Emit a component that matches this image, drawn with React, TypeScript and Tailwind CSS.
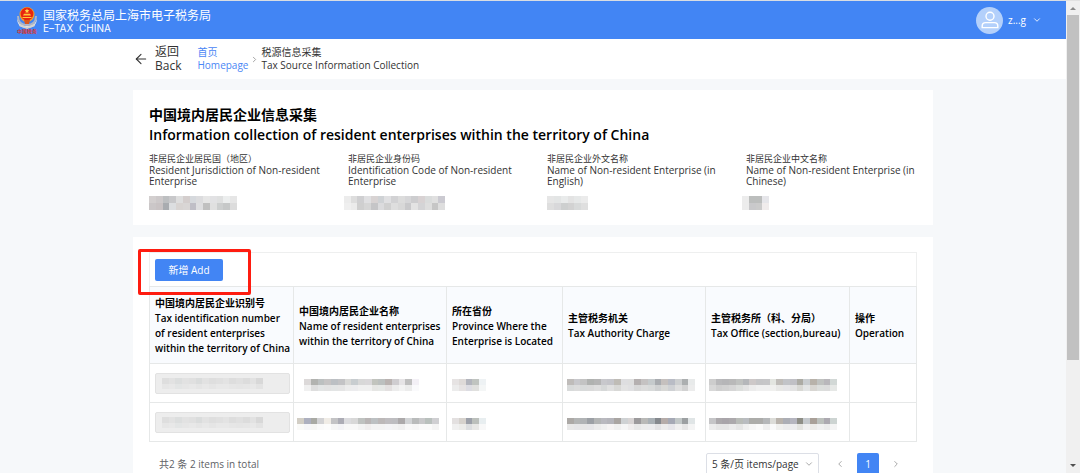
import { ArrowLeft, ChevronDown, ChevronLeft, ChevronRight } from 'lucide-react';

const FIELDS = [
  {
    zh: '非居民企业居民国（地区）',
    en: 'Resident Jurisdiction of Non-resident Enterprise',
    shift: '',
    mask: [
      ['#d3cfcf', '#cdc9ca', '#bdbfc1', '#c8c8ca', '#dedede', '#d4cecd', '#d6d9dd', '#dcdcde', '#e6e6e6', '#e2e2e4', '#dfe0e0', '#eceeee', '#e6e6e6'],
      ['#cbc7c8', '#c9c3c4', '#a9acb0', '#dcdee0', '#d8d4d2', '#d9d6d5', '#bfbec6', '#dedee0', '#c0c0c0', '#e0e0e0', '#cdcfcf', '#c6c8c8', '#dcdcdc'],
    ],
  },
  {
    zh: '非居民企业身份码',
    en: 'Identification Code of Non-resident Enterprise',
    shift: '-ml-1',
    mask: [
      ['#ececec', '#dddddd', '#cfcfd1', '#e0e0e2', '#d8d3d3', '#cfd2d5', '#e0e0e2', '#d2d2d4', '#dcdcdc', '#d6d6d8', '#cdcdcf', '#d8d2d3', '#dadcdc', '#e0e0e0', '#cbcad1'],
      ['#efefef', '#ebebeb', '#cfcfcf', '#d6d6d6', '#c5c5c7', '#dbdbdd', '#d0d0d0', '#dedede', '#d8d8d8', '#c9c9cb', '#e3e3e3', '#d4d4d6', '#dedede', '#c6c6c6', '#dedede'],
    ],
  },
  {
    zh: '非居民企业外文名称',
    en: 'Name of Non-resident Enterprise (in English)',
    shift: '',
    mask: [
      ['#e6e6e6', '#e3e5e5', '#e9ebeb', '#e3e3e3', '#e6e8e8', '#ebebeb'],
      ['#dedede', '#d8d8da', '#cdcfcf', '#d2d2d2', '#d8dada', '#dfdfdf'],
    ],
  },
  {
    zh: '非居民企业中文名称',
    en: 'Name of Non-resident Enterprise (in Chinese)',
    shift: '-ml-1',
    mask: [
      ['#ececec', '#bcbebd', '#bcbebd', '#e6e6ea'],
      ['#ececec', '#c9c9cb', '#cbcbcb', '#f0ecec'],
    ],
  },
];

const COLUMNS = [
  {
    width: 'w-[144px]',
    zh: '中国境内居民企业识别号',
    en: ['Tax identification number', 'of resident enterprises', 'within the territory of China'],
  },
  {
    width: 'w-[153px]',
    zh: '中国境内居民企业名称',
    en: ['Name of resident enterprises', 'within the territory of China'],
  },
  { width: 'w-[116px]', zh: '所在省份', en: ['Province Where the', 'Enterprise is Located'] },
  { width: 'w-[143px]', zh: '主管税务机关', en: ['Tax Authority Charge'] },
  { width: 'w-[144px]', zh: '主管税务所（科、分局）', en: ['Tax Office (section,bureau)'] },
  { width: 'w-[67px]', zh: '操作', en: ['Operation'] },
];

const ID_MASK = [
  ['#dedede', '#e2e2e2', '#dcdede', '#e2e2e2', '#e0e0e0', '#dadcdc', '#e2e2e2', '#dedede', '#e0e0e0', '#e3e3e3', '#dddddd', '#e0e0e0', '#dcdcdc', '#e2e2e2', '#d8d8d8'],
  ['#e6e6e6', '#e8e8e8', '#e3e5e5', '#e6e6e6', '#e8e8e8', '#e5e5e5', '#e8e8e8', '#e5e5e5', '#e8e8e8', '#e8e8e8', '#e6e6e6', '#e5e5e5', '#e6e6e6', '#e8e8e8', '#e3e3e3'],
];

const ROWS = [
  {
    name: {
      pad: 'pl-[10px]',
      mask: [
        ['#dcd9d9', '#b2b3b0', '#bcc0c0', '#c6c4c4', '#bcc0c4', '#c3c3c5', '#d8d8d6', '#c8cdd0', '#d8d8d8', '#dad8da', '#c2c4be', '#bcc0bf', '#bab3b1', '#cfcdd0', '#e6e4e6', '#bfbfbf', '#f3f0f6'],
        ['#f0f0f0', '#dedede', '#e3e5e5', '#e3e3e3', '#e3e5e5', '#e5e5e5', '#ececec', '#ececee', '#f0f0f0', '#f0f0f0', '#e6e6e4', '#e6e8e6', '#e3e0e0', '#ececec', '#f3f3f3', '#ececec', '#fafafc'],
      ],
    },
    province: [
      ['#e6e3e3', '#dedad8', '#b3b5bd', '#c0c4c0', '#eef2f4'],
      ['#ececec', '#e6e3e3', '#dcdce2', '#e0e0de', '#f4f6f6'],
    ],
    authority: [
      ['#bfbcba', '#c8c8cc', '#c3c3c3', '#b0b2b0', '#b5b5b5', '#c8c8cc', '#c5c5ca', '#bfbcb6', '#dedee0', '#dedede', '#b5b0b0', '#c5c2c2', '#c5cacc', '#a9acb0', '#c5c0be', '#b9bcc5', '#cdcfd0', '#acafb0', '#e8eaea'],
      ['#d8dada', '#dcdcdc', '#d8dada', '#dadada', '#dedede', '#d6d8d8', '#e0e0e0', '#d8d8d6', '#e3e3e3', '#e0e0e2', '#d8d8d8', '#dcdcdc', '#d8dada', '#cfd1d2', '#d8d8d6', '#cfd1d4', '#dedede', '#d2d2d2', '#ececec'],
    ],
    office: [
      ['#cdcdcd', '#b9b9bb', '#b6b6b8', '#b9b9b9', '#c0c2c0', '#b5b7ba', '#cdc8c8', '#c5c5c7', '#c6c6c8', '#e3e5e0', '#c0bdb9', '#c2c4c8', '#c0c0c5', '#acaba4', '#c9cdd0', '#b8b2aa', '#c0c2c0', '#b9b7bb', '#d2d8d6'],
      ['#d8d8d8', '#cfcfcf', '#d2d2d2', '#d6d6d6', '#dcdedc', '#e3e3e3', '#ececec', '#f0f0f0', '#f0f0f0', '#f0f0ee', '#e8e8e6', '#e6e6e8', '#e3e3e3', '#d8d8d4', '#e3e5e5', '#d8d6d2', '#dcdedc', '#dcdcdc', '#e6e8e6'],
    ],
  },
  {
    name: {
      pad: 'pl-[3px]',
      mask: [
        ['#d2cec5', '#adb0bf', '#a9aaa4', '#d2d2d4', '#f0ece6', '#c3c3c5', '#acacb5', '#dcdcdf', '#d8d8d8', '#bfc2c0', '#b9b5b5', '#bcc0c2', '#bcb8b8', '#bfbdc0', '#bdbdc0', '#aca9aa', '#d2d4d6', '#b9bbbb', '#c8c8ca', '#b9c0bd', '#cfcfd2'],
        ['#fafaf8', '#f6f6f8', '#f6f6f4', '#fafafa', '#fcfcfc', '#f6f6f6', '#f3f3f6', '#f8f8f8', '#f8f8f8', '#f3f3f3', '#f0eeee', '#f3f3f3', '#f3f3f3', '#f4f4f6', '#f3f3f3', '#f0f0f0', '#f8f8f8', '#f6f6f6', '#fafafa', '#fafafa', '#f4f4f4'],
      ],
    },
    province: [
      ['#e3e0e0', '#d6d2cd', '#9ca0a9', '#bcc0bc', '#e8eef0'],
      ['#f0f0f0', '#ececea', '#dcdee0', '#e8e8e6', '#f8f8f8'],
    ],
    authority: [
      ['#aca9a6', '#b3b5b5', '#b0b3b5', '#9ca0a5', '#b3b5b5', '#b9b9bf', '#b5b5bb', '#a9a5a2', '#cfd2d4', '#d8d4d4', '#9c9a9c', '#b9b9b7', '#a9b0b5', '#85898e', '#b5aca9', '#a5a9b5', '#c2c8c8', '#9ca0a2', '#e0e5e6'],
      ['#e8e8e8', '#e6e6e8', '#e6e6e6', '#e6e6e8', '#ececec', '#f0f0f0', '#f6f4f4', '#f0f0f0', '#f6f6f6', '#f0eeee', '#e8e8e8', '#ececec', '#ececee', '#e3e3e5', '#ececec', '#e6e6ea', '#f0f0f0', '#e6e6e6', '#f4f4f4'],
    ],
    office: [
      ['#c5c5c7', '#aca9ac', '#a9a5aa', '#aca9ac', '#b9bcb8', '#b9bcc0', '#acaca9', '#acacaa', '#b5b7b9', '#dcdcd8', '#b9b3ac', '#acaeb5', '#b5b5bf', '#8e8e86', '#c5c9cd', '#a9a098', '#bcc0bc', '#aca9b0', '#cdd4d2'],
      ['#ececec', '#e6e6e6', '#e6e6e6', '#ececec', '#e6e6e6', '#f0f0f0', '#f6f6f6', '#fafafa', '#f0f0f0', '#fafafa', '#f0f0ee', '#ececec', '#ececee', '#e3e3e0', '#f0f0f0', '#ecebe8', '#f0f0f0', '#ececec', '#f4f4f4'],
    ],
  },
];

// Masked value, drawn as a mosaic with one rect per cell
function Mask({ cells, className = '' }: { cells: string[][]; className?: string }) {
  const cols = cells[0].length;
  return (
    <svg
      className={`block ${className}`}
      width={Math.round(cols * 6.75)}
      viewBox={`0 0 ${cols} ${cells.length}`}
      preserveAspectRatio="none"
      shapeRendering="crispEdges"
      aria-hidden="true"
    >
      {cells.map((row, y) =>
        row.map((fill, x) => <rect key={`${x}-${y}`} x={x} y={y} width="1" height="1" fill={fill} />)
      )}
    </svg>
  );
}

function Emblem() {
  return (
    <svg width="22" height="28" viewBox="0 0 22 28" aria-hidden="true">
      <path d="M1 12c1 5 4 8 10 8s9-3 10-8c0 6-3 10-10 10S1 18 1 12z" fill="#dfe3ea" />
      <path d="M2 10c0 6 3 9 9 9s9-3 9-9" fill="none" stroke="#aeb6c6" strokeWidth="2" />
      <path d="M4 18l7 3 7-3 1 2-8 3-8-3z" fill="#d6d3cd" />
      <circle cx="11" cy="8.5" r="7.5" fill="#f0a02c" />
      <circle cx="11" cy="8" r="6.4" fill="#e8250f" />
      <path d="M11 2.6l.7 1.5 1.6.2-1.2 1.1.3 1.6-1.4-.8-1.4.8.3-1.6-1.2-1.1 1.6-.2z" fill="#ffd84a" />
      <path d="M7 9.4h8l-1-1.6H8zM6.5 11h9v1h-9z" fill="#ffc83a" />
      <path d="M8 14h6l-1 4H9z" fill="#d9571f" />
      <text x="11" y="27" textAnchor="middle" fontSize="5" fontWeight="700" fill="#d8332b" fontFamily="'Noto Sans CJK SC', sans-serif">
        中国税务
      </text>
    </svg>
  );
}

function Header() {
  return (
    <header className="flex h-[39px] shrink-0 items-center justify-between border-t border-[#d9dde2] bg-[#4285f4] pr-6 pl-4 text-white">
      <div className="flex items-center gap-[5px]">
        <Emblem />
        <div className="pt-[2px]">
          <div className="text-[12px] leading-[14px]">国家税务总局上海市电子税务局</div>
          <div className="font-[Inter,sans-serif] text-[10px] leading-[10px] whitespace-pre">E–TAX  CHINA</div>
        </div>
      </div>
      <button type="button" className="flex items-center text-[10px]">
        <span className="flex size-[27px] items-center justify-center rounded-full bg-[#b3d0fb]">
          <svg width="18" height="18" viewBox="0 0 18 18" fill="none" stroke="#fff" strokeWidth="1.4" aria-hidden="true">
            <circle cx="9" cy="5.2" r="4" />
            <path d="M1.2 16.6v-1.8c0-2 1.4-3.2 3.4-3.2h8.800c2 0 3.4 1.2 3.4 3.2v1.8z" />
          </svg>
        </span>
        <span className="ml-[5px]">z...g</span>
        <ChevronDown size={10} className="ml-[6px]" />
      </button>
    </header>
  );
}

function Breadcrumb() {
  return (
    <div className="shrink-0 bg-white">
      <nav className="mx-auto flex h-10 max-w-[800px] items-center text-[#333]" aria-label="Breadcrumb">
        <button type="button" className="flex items-center gap-[6px] text-left text-[12px] leading-[14px]">
          <ArrowLeft size={16} strokeWidth={1.6} />
          <span>
            <span className="block">返回</span>
            <span className="block">Back</span>
          </span>
        </button>
        <a href="#home" className="ml-4 text-[10px] leading-[13px] text-[#4a86f5]">
          首页
          <br />
          Homepage
        </a>
        <ChevronRight size={9} className="mx-[2px] text-[#888]" />
        <div className="text-[10px] leading-[13px]">
          税源信息采集
          <br />
          Tax Source Information Collection
        </div>
      </nav>
    </div>
  );
}

function EnterpriseInfo() {
  return (
    <section className="bg-white py-[15px] pl-4">
      <h1 className="text-[14px] leading-[20px] font-semibold text-black">
        <span className="block">中国境内居民企业信息采集</span>
        <span className="block">
          Information collection of resident enterprises within the territory of China
        </span>
      </h1>
      <dl className="mt-2 grid grid-cols-4 gap-3 text-[10px] text-[#333]">
        {FIELDS.map((field) => (
          <div key={field.zh}>
            <dt>
              <span className="block text-[9px] leading-[12px]">{field.zh}</span>
              <span className="block leading-[11px]">{field.en}</span>
            </dt>
            <dd className={`mt-[9px] ${field.shift}`}>
              <Mask cells={field.mask} className="h-[14px]" />
            </dd>
          </div>
        ))}
      </dl>
    </section>
  );
}

function EnterpriseTable() {
  return (
    <table className="w-full table-fixed border-collapse">
      <thead>
        <tr className="h-[77px] bg-[#f9fbfe]">
          {COLUMNS.map((col) => (
            <th
              key={col.zh}
              className={`${col.width} border border-[#e6e8e8] pt-[2px] pl-[5px] text-left text-[10px] leading-[15px] font-semibold whitespace-nowrap text-black`}
            >
              <span className="block">{col.zh}</span>
              {col.en.map((line) => (
                <span key={line} className="block">
                  {line}
                </span>
              ))}
            </th>
          ))}
        </tr>
      </thead>
      <tbody>
        {ROWS.map((row, i) => (
          <tr key={i} className="h-[39px]">
            <td className="border border-[#e6e8e8] pr-[3px] pl-[5px]">
              <div className="relative">
                <input
                  disabled
                  aria-label={`Tax identification number ${i + 1}`}
                  className="block h-[21px] w-full rounded-xs border border-[#e2e2e2] bg-[#ededed]"
                />
                <Mask cells={ID_MASK} className="absolute top-[5px] left-[7px] h-[11px]" />
              </div>
            </td>
            <td className={`border border-[#e6e8e8] pt-[3px] ${row.name.pad}`}>
              <Mask cells={row.name.mask} className="h-[12px]" />
            </td>
            <td className="border border-[#e6e8e8] pt-[3px] pl-[5px]">
              <Mask cells={row.province} className="h-[12px]" />
            </td>
            <td className="border border-[#e6e8e8] pt-[3px] pl-1">
              <Mask cells={row.authority} className="h-[12px]" />
            </td>
            <td className="border border-[#e6e8e8] pt-[3px] pl-[3px]">
              <Mask cells={row.office} className="h-[12px]" />
            </td>
            <td className="border border-[#e6e8e8]" />
          </tr>
        ))}
      </tbody>
    </table>
  );
}

function Pagination() {
  return (
    <div className="mt-[11px] flex items-center gap-[6px] px-[10px] text-[10px] text-[#606266]">
      <span>共2 条 2 items in total</span>
      <div className="relative mr-1 ml-auto">
        <select
          aria-label="Items per page"
          className="block h-[22px] w-[113px] appearance-none rounded-xs border border-[#dcdfe6] bg-white pl-[5px] text-[#333]"
        >
          <option>5 条/页 items/page</option>
        </select>
        <ChevronDown size={10} className="pointer-events-none absolute top-[6px] right-[5px] text-[#999]" />
      </div>
      <button type="button" aria-label="Previous page" className="flex size-[22px] items-center justify-center text-[#999]">
        <ChevronLeft size={10} />
      </button>
      <button type="button" className="size-[22px] rounded-xs bg-[#4285f4] text-white">
        1
      </button>
      <button type="button" aria-label="Next page" className="flex size-[22px] items-center justify-center text-[#999]">
        <ChevronRight size={10} />
      </button>
    </div>
  );
}

function Scrollbar() {
  return (
    <div className="flex w-[14px] shrink-0 flex-col items-center border-t border-[#e2e2e2] bg-[#f0f0f0]" aria-hidden="true">
      <svg width="14" height="14" viewBox="0 0 14 14">
        <path d="M4 9h6L7 6z" fill="#8a8a8a" />
      </svg>
      <div className="h-[73%] w-3 bg-[#c1c1c1]" />
      <svg className="mt-auto" width="14" height="14" viewBox="0 0 14 14">
        <path d="M4 5h6L7 8z" fill="#505050" />
      </svg>
    </div>
  );
}

export default function App() {
  return (
    <div className="flex h-screen overflow-hidden bg-[#f6f8fa] font-['Open_Sans','Noto_Sans_CJK_SC',sans-serif]">
      <div className="flex min-w-0 flex-1 flex-col overflow-hidden">
        <Header />
        <Breadcrumb />
        <main className="mx-auto mt-[11px] flex w-full max-w-[800px] flex-col gap-3">
          <EnterpriseInfo />
          <section className="bg-white px-4 pt-[15px] pb-4">
            <div className="relative border border-b-0 border-[#eeefef] pt-[6px] pb-[5px] pl-[5px]">
              <button type="button" className="block h-[22px] w-[68px] rounded-xs bg-[#4285f4] text-[10px] text-white">
                新增 Add
              </button>
              <div className="pointer-events-none absolute -top-1 -left-3 h-[46px] w-[113px] rounded-xs border-3 border-[#fe1c10]" />
            </div>
            <EnterpriseTable />
            <Pagination />
          </section>
        </main>
      </div>
      <Scrollbar />
    </div>
  );
}
